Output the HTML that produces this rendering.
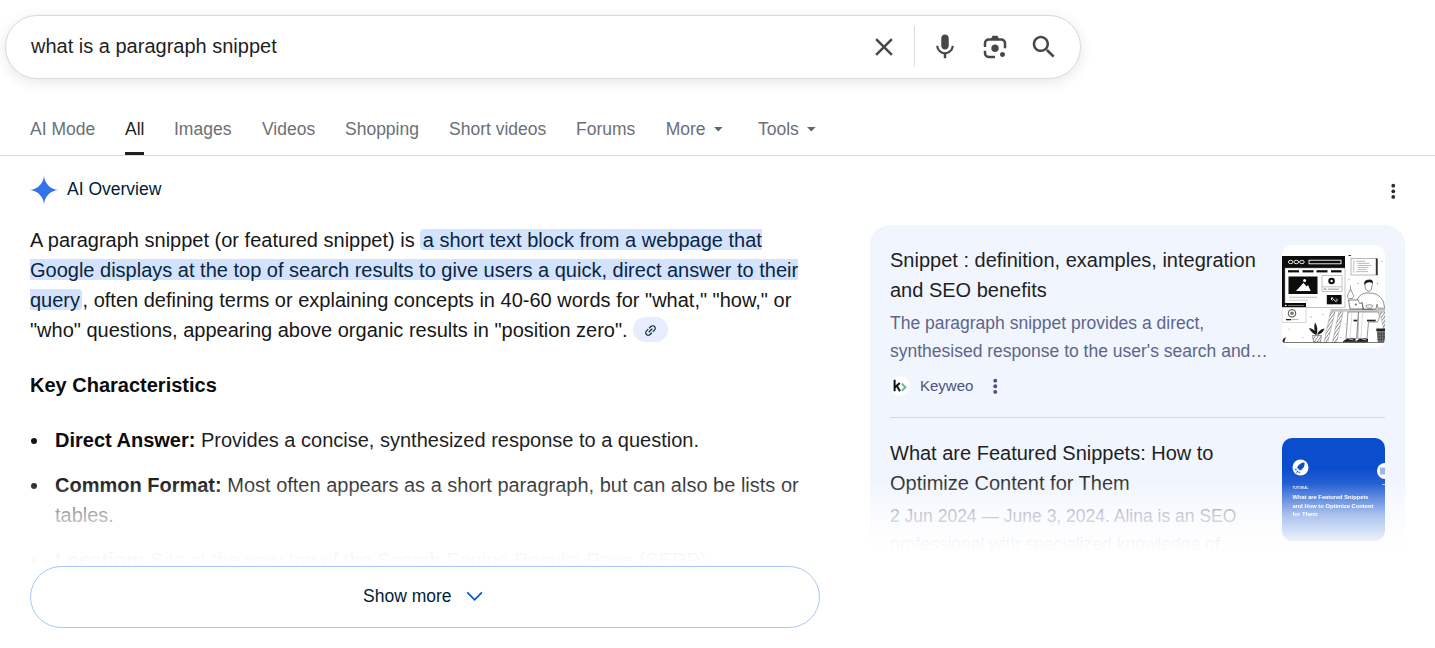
<!DOCTYPE html>
<html>
<head>
<meta charset="utf-8">
<style>
html,body{margin:0;padding:0;}
svg{display:block;}
body{width:1435px;height:648px;overflow:hidden;background:#fff;font-family:"Liberation Sans",sans-serif;position:relative;color:#1f1f1f;}
.abs{position:absolute;}
.sb{left:5px;top:15px;width:1074px;height:62px;border:1px solid #d6d9e0;border-radius:32px;box-shadow:0 3px 12px 1px rgba(64,60,67,.11);background:#fff;}
.q{left:31px;top:35px;font-size:20px;line-height:23px;color:#1f1f1f;white-space:nowrap;}
.tab{top:118px;font-size:17.5px;line-height:22px;color:#6b7076;white-space:nowrap;}
.tab.on{color:#1f1f1f;}
.hr{left:0;top:155px;width:1435px;height:1px;background:#dadce0;}
.ul{left:125px;top:152px;width:19px;height:3px;background:#1f1f1f;}
.p{left:30px;top:225px;width:800px;font-size:20px;line-height:30px;color:#171717;white-space:nowrap;}
.hl{color:#0a2540;}
.hlb{background:#d3e3fd;height:21px;}
.h3{left:30px;top:370px;font-size:20px;line-height:30px;font-weight:bold;color:#0c0c0c;}
.li{left:55px;font-size:20px;line-height:30px;color:#1f1f1f;white-space:nowrap;}
.li b{color:#0c0c0c;}
.dot{width:6px;height:6px;border-radius:50%;background:#141414;left:31px;}
.card{left:870px;top:225px;width:535px;height:335px;border-radius:20px 20px 0 0;background:#f0f5fe;}
.t{left:890px;font-size:20px;line-height:30px;color:#1f1f1f;white-space:nowrap;}
.d{left:890px;font-size:17.5px;line-height:28px;color:#5e6589;white-space:nowrap;}
.btn{left:30px;top:566px;width:788px;height:60px;border:1px solid #a8c7fa;border-radius:31px;background:#fff;}
</style>
</head>
<body>
<!-- search box -->
<div class="abs sb"></div>

<svg class="abs" style="left:869px;top:32px" width="30" height="30" viewBox="0 0 24 24" fill="#474747"><path d="M19 6.41L17.59 5 12 10.59 6.41 5 5 6.41 10.59 12 5 17.59 6.41 19 12 13.41 17.59 19 19 17.59 13.41 12z"/></svg>
<div class="abs" style="left:914px;top:26px;width:1px;height:41px;background:#dadce6;"></div>
<svg class="abs" style="left:930px;top:32px" width="30" height="30" viewBox="0 0 24 24" fill="#474747"><path d="M12 14c1.66 0 2.99-1.34 2.99-3L15 5c0-1.66-1.34-3-3-3S9 3.340 9 5v6c0 1.660 1.340 3 3 3zm5.300-3c0 3-2.540 5.100-5.300 5.100S6.700 14 6.700 11H5c0 3.410 2.720 6.230 6 6.720V21h2v-3.280c3.280-.48 6-3.300 6-6.720h-1.700z"/></svg>
<svg class="abs" style="left:980px;top:32px" width="30" height="30" viewBox="0 -960 960 960" fill="#474747"><path d="M480-320q-50 0-85-35t-35-85q0-50 35-85t85-35q50 0 85 35t35 85q0 50-35 85t-85 35Zm240 160q-33 0-56.500-23.500T640-240q0-33 23.500-56.500T720-320q33 0 56.500 23.500T800-240q0 33-23.500 56.500T720-160Zm-440 40q-66 0-113-47t-47-113v-80h80v80q0 33 23.500 56.500T280-200h200v80H280Zm480-320v-160q0-33-23.500-56.500T680-680H280q-33 0-56.500 23.500T200-600v120h-80v-120q0-66 47-113t113-47h80l40-80h160l40 80h80q66 0 113 47t47 113v160h-80Z"/></svg>
<svg class="abs" style="left:1029px;top:32px" width="30" height="30" viewBox="0 0 24 24" fill="#474747"><path d="M15.5 14h-.79l-.28-.27C15.410 12.590 16 11.110 16 9.500 16 5.910 13.090 3 9.500 3S3 5.910 3 9.500 5.910 16 9.500 16c1.610 0 3.090-.59 4.230-1.570l.27.28v.79l5 4.990L20.490 19l-4.990-5zm-6 0C7.010 14 5 11.990 5 9.500S7.010 5 9.500 5 14 7.010 14 9.500 11.990 14 9.500 14z"/></svg>
<div class="abs q">what is a paragraph snippet</div>

<!-- tabs -->
<div class="abs tab" style="left:30px">AI Mode</div>
<div class="abs tab on" style="left:125px">All</div>
<div class="abs tab" style="left:174px">Images</div>
<div class="abs tab" style="left:262px">Videos</div>
<div class="abs tab" style="left:345px">Shopping</div>
<div class="abs tab" style="left:449px">Short videos</div>
<div class="abs tab" style="left:576px">Forums</div>
<div class="abs tab" style="left:665.700px">More</div>
<div class="abs tab" style="left:758px">Tools</div>

<svg class="abs" style="left:714px;top:127px" width="9" height="5" viewBox="0 0 9 5"><path d="M0 0h8.600L4.300 4.400z" fill="#63676d"/></svg>
<svg class="abs" style="left:806.500px;top:127px" width="9" height="5" viewBox="0 0 9 5"><path d="M0 0h8.600L4.300 4.400z" fill="#63676d"/></svg>
<div class="abs hr"></div>
<div class="abs ul"></div>

<!-- AI overview header -->
<svg class="abs" style="left:29.300px;top:175.300px" width="30" height="30" viewBox="0 0 24 24"><path d="M12 0C12 6.600 17.400 12 24 12 17.400 12 12 17.400 12 24 12 17.400 6.600 12 0 12 6.600 12 12 6.600 12 0Z" fill="#3174ea"/></svg>
<svg class="abs" style="left:1382px;top:180px" width="22.500" height="22.500" viewBox="0 0 24 24" fill="#2a2a2a"><circle cx="12" cy="6" r="2"/><circle cx="12" cy="12" r="2"/><circle cx="12" cy="18" r="2"/></svg>

<div class="abs" style="left:67px;top:178px;font-size:17.5px;line-height:22px;color:#001d35;">AI Overview</div>

<!-- paragraph -->
<div class="abs hlb" style="left:420px;top:229.200px;width:342px;border-radius:4px 0 0 4px;"></div>
<div class="abs hlb" style="left:30px;top:259.200px;width:768px;"></div>
<div class="abs hlb" style="left:30px;top:289.200px;width:52px;border-radius:0 4px 4px 0;"></div>
<div class="abs p">A paragraph snippet (or featured snippet) is <span class="hl" style="padding-left:2.500px">a short text block from a webpage that</span><br><span class="hl">Google displays at the top of search results to give users a quick, direct answer to their</span><br><span class="hl" style="padding-right:2.500px">query</span>, often defining terms or explaining concepts in 40-60 words for "what," "how," or<br>"who" questions, appearing above organic results in "position zero".</div>
<div class="abs" style="left:633px;top:317px;width:35px;height:25px;border-radius:12.500px;background:#e5edff;"></div>
<svg class="abs" style="left:643.200px;top:322.500px;transform:rotate(-45deg);" width="15" height="15" viewBox="0 0 24 24" fill="#0b2a45"><path d="M3.900 12c0-1.710 1.390-3.100 3.100-3.100h4V7H7c-2.760 0-5 2.240-5 5s2.240 5 5 5h4v-1.900H7c-1.710 0-3.100-1.390-3.100-3.100zM8 13h8v-2H8v2zm9-6h-4v1.900h4c1.710 0 3.100 1.390 3.100 3.100s-1.390 3.100-3.100 3.100h-4V17h4c2.760 0 5-2.240 5-5s-2.240-5-5-5z"/></svg>

<div class="abs h3">Key Characteristics</div>

<div class="abs dot" style="top:438px"></div>
<div class="abs li" style="top:425px"><b>Direct Answer:</b> Provides a concise, synthesized response to a question.</div>
<div class="abs dot" style="top:483px"></div>
<div class="abs li" style="top:470px"><b>Common Format:</b> Most often appears as a short paragraph, but can also be lists or<br>tables.</div>

<div class="abs dot" style="top:558px"></div>
<div class="abs li" style="top:545px"><b>Location:</b> Sits at the very top of the Search Engine Results Page (SERP).</div>
<div class="abs" style="left:0;top:468px;width:860px;height:100px;background:linear-gradient(to bottom,rgba(255,255,255,0) 0,rgba(255,255,255,.12) 17px,rgba(255,255,255,.64) 47px,rgba(255,255,255,.93) 77px,rgba(255,255,255,.985) 92px,#fff 100px);"></div>

<!-- right card -->
<div class="abs card"></div>
<div class="abs t" style="top:245px">Snippet : definition, examples, integration<br>and SEO benefits</div>
<div class="abs d" style="top:309px">The paragraph snippet provides a direct,<br>synthesised response to the user's search and…</div>
<div class="abs" style="left:920px;top:377px;font-size:15px;line-height:18px;color:#4d5478;">Keyweo</div>
<div class="abs t" style="top:438px">What are Featured Snippets: How to<br>Optimize Content for Them</div>
<div class="abs d" style="top:502px">2 Jun 2024 — June 3, 2024. Alina is an SEO<br>professional with specialized knowledge of…</div>


<div class="abs" style="left:890px;top:376px;width:20px;height:20px;border-radius:50%;background:#fff;"></div>
<svg class="abs" style="left:890px;top:376px" width="20" height="20" viewBox="0 0 20 20"><path d="M4.600 3.800v11.400M5 11.200L9.800 7M6.800 9.800L10 15.200" stroke="#111" stroke-width="2" fill="none"/><path d="M11.800 7.600L15.500 11.200L11.800 14.800" stroke="#5fbf92" stroke-width="1.900" fill="none"/></svg>
<svg class="abs" style="left:984px;top:375px" width="22.500" height="22.500" viewBox="0 0 24 24" fill="#4a5380"><circle cx="12" cy="6" r="2.100"/><circle cx="12" cy="12" r="2.100"/><circle cx="12" cy="18" r="2.100"/></svg>
<div class="abs" style="left:890px;top:417px;width:495px;height:1px;background:#c4dbfb;"></div>
<svg class="abs" style="left:1282px;top:244.500px;border-radius:10px;" width="103" height="103" viewBox="0 0 103 103">
<defs><filter id="bl" x="-5%" y="-5%" width="110%" height="110%"><feGaussianBlur stdDeviation="0.45"/></filter>
<pattern id="ht" width="2.400" height="2.400" patternUnits="userSpaceOnUse" patternTransform="rotate(-55)"><rect width="2.400" height="2.400" fill="#fff"/><rect width="2.400" height="0.800" fill="#8a8a8a"/></pattern></defs>
<rect width="103" height="103" fill="#fff"/>
<g filter="url(#bl)">
<!-- browser window -->
<rect x="0" y="11" width="63" height="12" fill="#0a0a0a"/>
<rect x="0" y="23" width="3" height="36" fill="#0a0a0a"/>
<rect x="3" y="23" width="60" height="39.500" fill="#fff" stroke="#8a8a8a" stroke-width=".5"/>
<g fill="none" stroke="#fff" stroke-width=".9"><ellipse cx="8.700" cy="17" rx="2.300" ry="1.700"/><ellipse cx="14.300" cy="17" rx="2.300" ry="1.700"/><ellipse cx="19.900" cy="17" rx="2.300" ry="1.700"/><rect x="27" y="15.200" width="32" height="3.600"/></g>
<g fill="#0a0a0a"><rect x="6" y="25.200" width="11" height="2.200"/><rect x="20.500" y="25.200" width="11" height="2.200"/><rect x="34.500" y="25.200" width="11" height="2.200"/><rect x="49" y="25.200" width="10.500" height="2.200"/></g>
<rect x="6.500" y="31.500" width="29" height="17.500" fill="#0a0a0a"/>
<path d="M14 46L21.500 37.800L24.500 41.500L26 40L28.700 46Z" fill="#fff"/><circle cx="22.600" cy="35.600" r="1.500" fill="#fff"/>
<rect x="40" y="30.700" width="20" height="15.800" fill="#fff" stroke="#9a9a9a" stroke-width=".6"/>
<circle cx="49.600" cy="36" r="3.300" fill="#0a0a0a"/><circle cx="49.600" cy="36" r="1.200" fill="#fff"/>
<rect x="40" y="41.600" width="20" height=".6" fill="#9a9a9a"/><rect x="41.500" y="43.200" width="3" height="2" fill="#bbb"/><rect x="46" y="43.600" width="11" height="1.200" fill="#aaa"/>
<rect x="7" y="51.800" width="28" height=".9" fill="#b5b5b5"/><rect x="7" y="54.700" width="19" height=".9" fill="#c5c5c5"/>
<rect x="44.800" y="50" width="14.800" height="9.300" fill="#0a0a0a"/>
<path d="M49.500 52.500l5 4.500M50.500 55.500l-1.500-1.500 1.500-1.500M54 53.500l1.500 1.500-1.500 1.500" stroke="#fff" stroke-width=".9" fill="none"/>
<!-- small window -->
<rect x="0" y="58" width="24" height="4.300" fill="#0a0a0a"/><rect x="3" y="59.800" width="1.500" height="1.300" fill="#fff"/><rect x="6" y="60" width="16" height=".8" fill="#888"/>
<rect x="0" y="62.300" width="24" height="15.200" fill="#fff" stroke="#aaa" stroke-width=".5"/>
<circle cx="10" cy="68.300" r="3.800" fill="#fff" stroke="#333" stroke-width=".9"/><circle cx="10" cy="68.300" r="1.800" fill="#777"/>
<rect x="4" y="74" width="5" height="1.300" fill="#222"/><rect x="9.500" y="74.200" width="7" height=".9" fill="#aaa"/>
<!-- code panel -->
<rect x="69" y="13.500" width="26" height="16.500" fill="#fff" stroke="#999" stroke-width=".7"/><rect x="93.800" y="13.500" width="1.900" height="16.500" fill="#333"/>
<g fill="#aaa"><rect x="74" y="15.800" width="9" height=".8"/><rect x="75.500" y="17.900" width="12" height=".8"/><rect x="75.500" y="20" width="14" height=".8"/><rect x="75.500" y="22.100" width="11" height=".8"/><rect x="75.500" y="24.200" width="9" height=".8"/><rect x="74" y="26.300" width="12" height=".8"/><rect x="71.500" y="15" width=".7" height="13" /></g>
<rect x="66.500" y="10" width="2.500" height="1" fill="#333"/>
<!-- desk -->
<rect x="48.500" y="64.600" width="54.500" height=".7" fill="#555"/><rect x="48.500" y="66.400" width="54.500" height=".5" fill="#aaa"/>
<path d="M48.500 67L42 97.500h3.700L53 67z" fill="url(#ht)" stroke="#777" stroke-width=".4"/>
<path d="M56.800 67L50.400 97.500h4.200L61 67z" fill="url(#ht)" stroke="#777" stroke-width=".4"/>
<path d="M98 67l3.500 17h1.500v-17z" fill="url(#ht)" stroke="#777" stroke-width=".4"/>
<!-- legs -->
<path d="M66 67h10.500L74.500 93.500H64z" fill="#fff" stroke="#555" stroke-width=".6"/>
<path d="M76.500 67h20c1.500 4 1 7.500-1.200 10H86.500L85 93.500h-9.200z" fill="#fff" stroke="#555" stroke-width=".6"/>
<path d="M70 68l-2 25M80.500 68l-1.500 25" stroke="#aaa" stroke-width=".4" fill="none"/>
<rect x="71.500" y="74.700" width="3.800" height="1.700" fill="#222"/><rect x="85" y="74.700" width="8.700" height="1.700" fill="#222"/>
<path d="M61 96.600c2-2.400 5.500-3.600 8.500-3.100l4 .2v2.900zM73.800 96.600c2-2.400 5.500-3.600 8.500-3.100l3.700.2v2.900z" fill="#1a1a1a"/>
<path d="M66.500 93.800l5 1.200M79.500 93.800l5 1.200" stroke="#fff" stroke-width=".7"/>
<rect x="61" y="96.300" width="25" height="1.100" fill="#1a1a1a"/>
<!-- laptop -->
<path d="M66.500 55h13l1.800 9H68z" fill="#fff" stroke="#444" stroke-width=".7"/><circle cx="73.800" cy="59.600" r="1" fill="#666"/>
<path d="M79.500 54.500l2.500 9.500" stroke="#222" stroke-width="1"/><rect x="80.500" y="63.400" width="11" height="1" fill="#333"/>
<!-- cup / lamp -->
<path d="M66.500 48.500l2-4.500 2 4.500c1.500 2 1.500 4-.5 5h-3c-2-1-2-3-.5-5z" fill="#fff" stroke="#555" stroke-width=".6"/><path d="M68.500 40.500v4" stroke="#555" stroke-width=".5"/>
<!-- person -->
<path d="M83 39c0-2.500 2.800-4 5.200-3 2.300.2 2.800 2.500 1.900 4l-.5 3.300c-.5 2.300-2.400 3.300-3.800 2.800-1.900-.5-2.800-2.800-2.800-7.100z" fill="#fff" stroke="#444" stroke-width=".6"/>
<path d="M82.300 39.800c-.8-3 1.300-5.300 4.300-5.100 2.600-.8 4.900 1 4.100 3.700-1.500-1-3-1.300-4.500-.8-1.500.3-2.900.9-3.900 2.200z" fill="#1a1a1a"/>
<path d="M75.500 54c1.800-3.500 4.500-5.500 8.500-6l6.500.2c5 1 9 4 11 9l1.200 6H96l-1-4-1 4.800H81.500l-1.500-7-2 2z" fill="#fff" stroke="#444" stroke-width=".6"/>
<path d="M84 60.800c2.300-1.400 4.800-1.400 6.800 0-.5 1.700-1.900 2.500-3.800 2.400-1.500 0-2.500-1-3-2.400z" fill="#fff" stroke="#444" stroke-width=".6"/>
<!-- plant -->
<path d="M34.500 90c-3-1-6-3.500-7.500-7 3 .3 5.500 2 7.500 5zM34.500 90c-2.500-4-2.800-8.500-1.500-12.500 2.500 3.500 3 8 1.500 12.500zM35 90c1-3.500 3.500-6 7.500-6.500-1 3.500-3.500 5.500-7.500 6.500z" fill="#1a1a1a"/>
<path d="M30.500 90.500h9l-1 6.500h-7z" fill="url(#ht)" stroke="#444" stroke-width=".5"/>
<!-- bin -->
<rect x="94.300" y="83.500" width="8.700" height="2.800" fill="#222"/><path d="M94.800 86.300h8.200v11h-7.200z" fill="#777"/><path d="M97 86.300v11M99.500 86.300v11M101.800 86.300v11M95 89h8M95 91.700h8M95 94.400h8" stroke="#333" stroke-width=".5"/>
<!-- ground -->
<rect x="0" y="97.300" width="103" height=".7" fill="#444"/>
<path d="M0 97c.5-3 2-4.500 4-4.500-1 1.500-1.500 3-1.500 4.500z" fill="#222"/>
<g fill="#999"><circle cx="29" cy="72" r=".7"/><circle cx="41" cy="69.500" r=".6"/><circle cx="7" cy="84" r=".6"/><circle cx="21" cy="92.500" r=".6"/><circle cx="67" cy="34.500" r=".6"/><circle cx="76" cy="38.500" r=".7"/><circle cx="95.500" cy="38.500" r=".7"/><circle cx="100" cy="16.500" r=".6"/><circle cx="59" cy="92.500" r=".6"/><circle cx="64" cy="79" r=".5"/></g>
</g>
</svg>
<svg class="abs" style="left:1282px;top:438px;border-radius:10px;" width="103" height="103" viewBox="0 0 103 103">
<defs><filter id="bl2" x="-5%" y="-5%" width="110%" height="110%"><feGaussianBlur stdDeviation="0.35"/></filter></defs>
<rect width="103" height="103" fill="#0a4dcd"/>
<g filter="url(#bl2)">
<circle cx="18.500" cy="29.500" r="8" fill="#fff"/>
<path d="M22.500 24.500c-3.500 0-6 2-7.500 5l3 3c3-1.500 5-4 4.500-8zM14.500 30.500l-2 .8 2 1.200zM17 33.500l-.8 2 2-.8zM13.500 35.500l2-3 1 1z" fill="#0a4dcd"/>
<circle cx="103" cy="33" r="8" fill="#fff"/><rect x="98" y="29.500" width="5" height="7" fill="#9db5ea"/>
<rect x="100.500" y="46" width="2.500" height=".8" fill="#fff"/>
<text x="10.500" y="50.600" font-family="Liberation Sans, sans-serif" font-size="3" font-weight="bold" fill="#e8eefc" letter-spacing=".1">TUTORIAL</text>
<g font-family="Liberation Sans, sans-serif" font-size="5.700" font-weight="bold" fill="#fff">
<text x="10.500" y="61.300" textLength="76" lengthAdjust="spacingAndGlyphs">What are Featured Snippets</text>
<text x="10.500" y="69.600" textLength="81" lengthAdjust="spacingAndGlyphs">and How to Optimize Content</text>
<text x="10.500" y="77.800" textLength="25" lengthAdjust="spacingAndGlyphs">for Them</text>
</g>
</g>
</svg>

<div class="abs" style="left:862px;top:468px;width:573px;height:85px;background:linear-gradient(to bottom,rgba(255,255,255,0) 0,rgba(255,255,255,.1) 15px,rgba(255,255,255,.66) 47px,rgba(255,255,255,.95) 75px,#fff 85px);"></div>
<div class="abs" style="left:862px;top:553px;width:573px;height:13px;background:#fff;"></div>

<!-- show more -->
<div class="abs btn"></div>
<div class="abs" style="left:363px;top:585px;font-size:17.5px;line-height:22px;color:#001d35;">Show more</div>
<svg class="abs" style="left:465px;top:589px" width="20" height="16" viewBox="0 0 20 16"><path d="M2.300 3.300L9.600 10.800L16.900 3.300" fill="none" stroke="#0b57d0" stroke-width="1.800"/></svg>
</body>
</html>
